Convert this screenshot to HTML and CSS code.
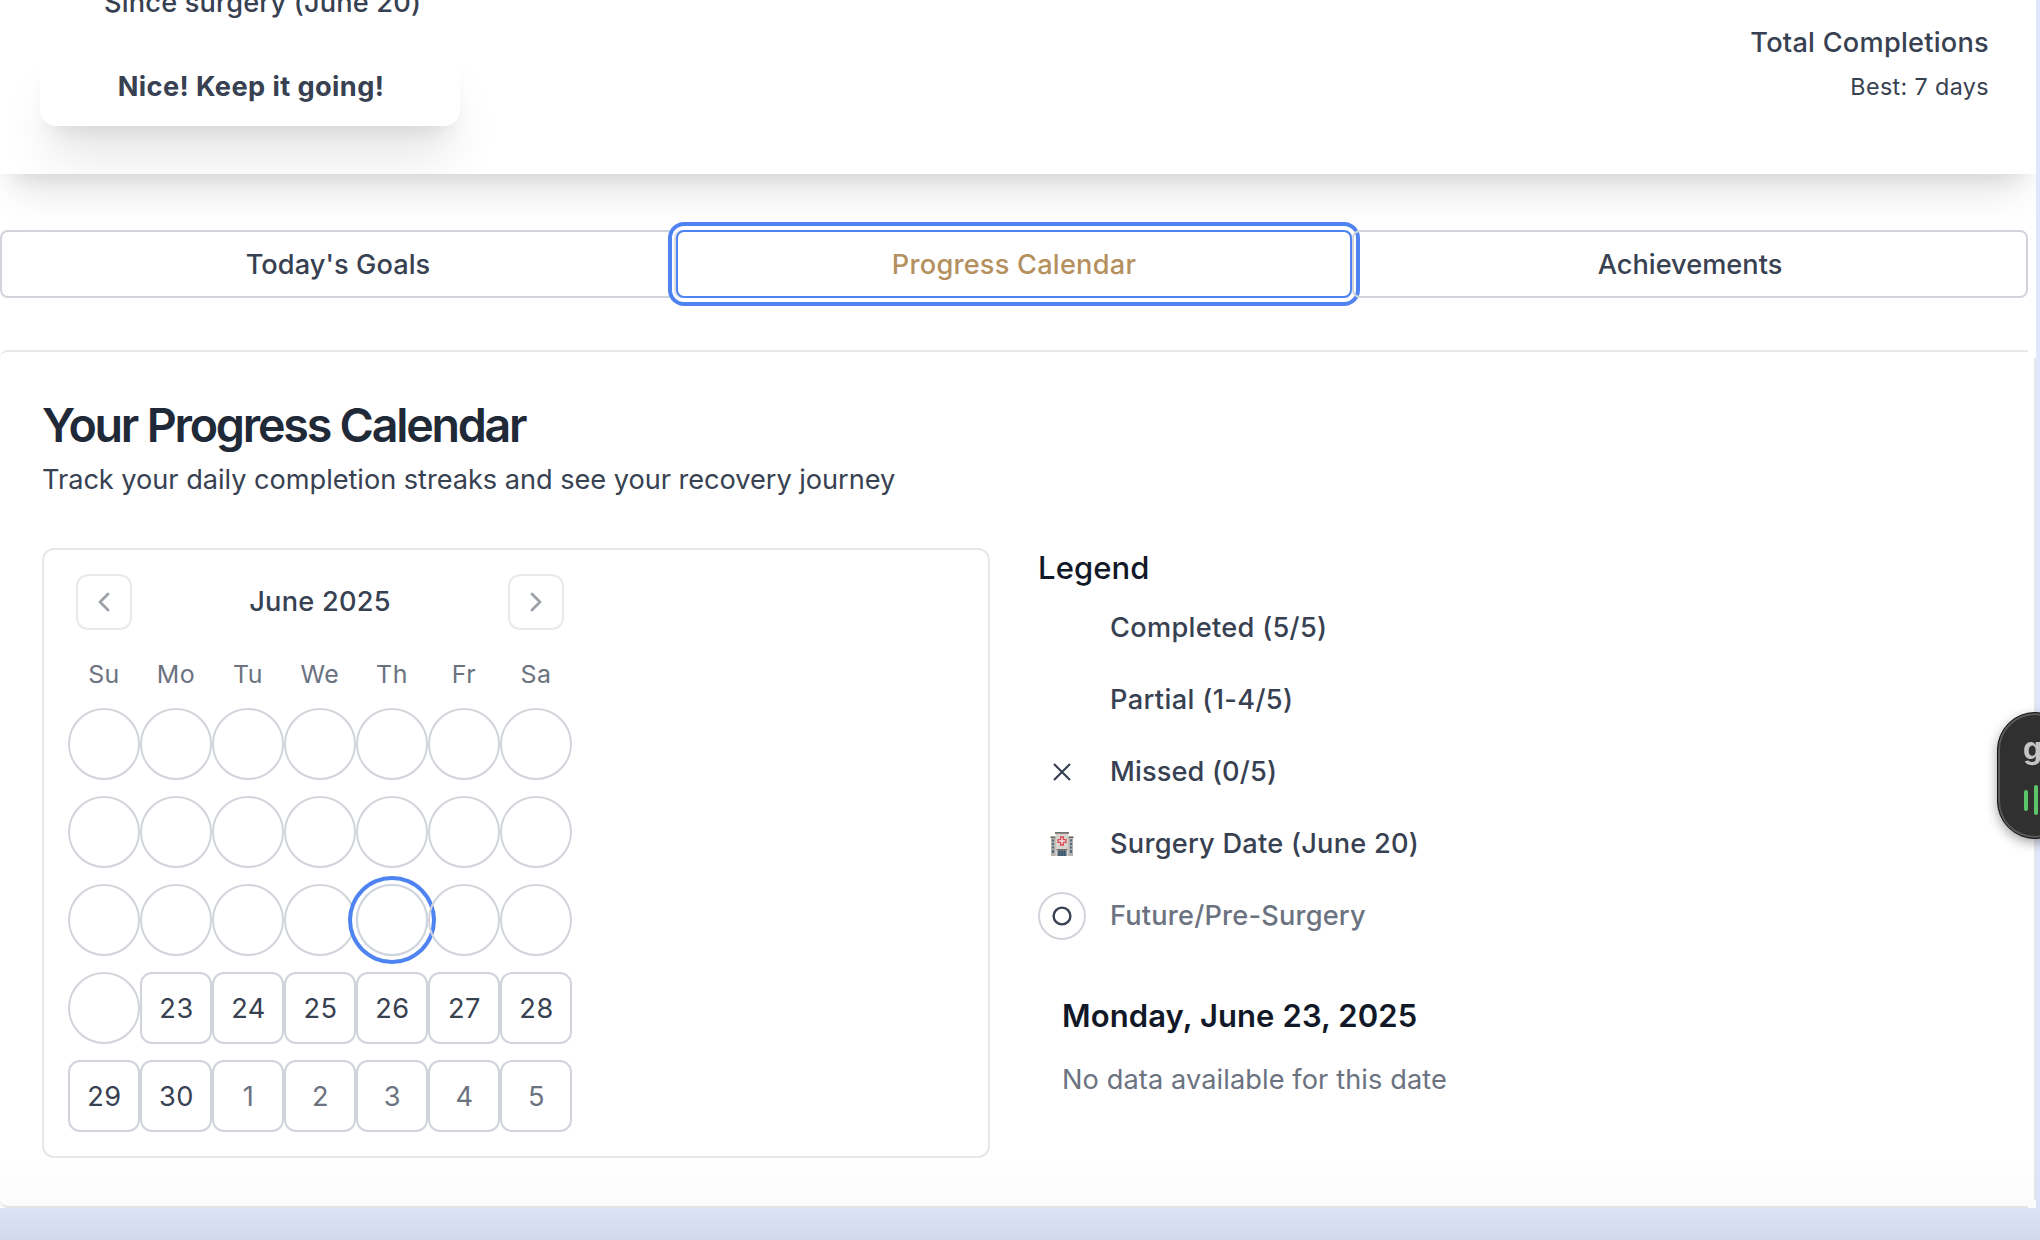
FILE: index.html
```html
<!DOCTYPE html>
<html lang="en">
<head>
<meta charset="utf-8">
<title>Recovery Progress</title>
<link rel="stylesheet" href="styles.css">
</head>
<body>
<main class="page">
  <section class="hero">
    <div class="streak">
      <p class="streak-label">Since surgery (June 20)</p>
      <div class="streak-note">Nice! Keep it going!</div>
    </div>
    <div class="totals">
      <p class="totals-label">Total Completions</p>
      <p class="totals-best">Best: 7 days</p>
    </div>
  </section>

  <nav class="tabs">
    <button class="tab tab-goals">Today's Goals</button>
    <button class="tab tab-active">Progress Calendar</button>
    <button class="tab tab-achievements">Achievements</button>
  </nav>

  <section class="panel">
    <h2 class="title">Your Progress Calendar</h2>
    <p class="subtitle">Track your daily completion streaks and see your recovery journey</p>
    <div class="columns">
      <div class="calendar">
        <div class="cal-head">
          <button class="cal-nav" aria-label="Previous month"><svg viewBox="0 0 14 22" width="14" height="22"><path d="M11 3 3 11l8 8"/></svg></button>
          <span class="cal-month">June 2025</span>
          <button class="cal-nav" aria-label="Next month"><svg viewBox="0 0 14 22" width="14" height="22"><path d="m3 3 8 8-8 8"/></svg></button>
        </div>
        <div class="weekdays"><span>Su</span><span>Mo</span><span>Tu</span><span>We</span><span>Th</span><span>Fr</span><span>Sa</span></div>
        <div class="days">
          <span class="day past"></span><span class="day past"></span><span class="day past"></span><span class="day past"></span><span class="day past"></span><span class="day past"></span><span class="day past"></span>
          <span class="day past"></span><span class="day past"></span><span class="day past"></span><span class="day past"></span><span class="day past"></span><span class="day past"></span><span class="day past"></span>
          <span class="day past"></span><span class="day past"></span><span class="day past"></span><span class="day past"></span><span class="day past focused"></span><span class="day past"></span><span class="day past"></span>
          <span class="day past"></span><span class="day">23</span><span class="day">24</span><span class="day">25</span><span class="day">26</span><span class="day">27</span><span class="day">28</span>
          <span class="day">29</span><span class="day">30</span><span class="day outside">1</span><span class="day outside">2</span><span class="day outside">3</span><span class="day outside">4</span><span class="day outside">5</span>
        </div>
      </div>

      <aside class="side">
        <h3 class="legend-title">Legend</h3>
        <ul class="legend">
          <li><span class="mark"></span><span class="completed">Completed (5/5)</span></li>
          <li><span class="mark"></span><span class="partial">Partial (1-4/5)</span></li>
          <li><span class="mark"><svg viewBox="0 0 20 20" width="20" height="20"><path class="cross" d="m2 2 16 16m0-16-16 16"/></svg></span><span class="missed">Missed (0/5)</span></li>
          <li><span class="mark"><svg viewBox="0 0 24 24" width="24" height="24">
            <path fill="#b5b0aa" d="M1 4.500h5V24H1zM18 4.500h5V24h-5z"/>
            <path fill="#6f6a66" d="M.5 4.500h5v1.600h-5zM18.500 4.500h5v1.600h-5z"/>
            <path fill="#d6d2ce" d="M5.500 1h13v23h-13z"/>
            <path fill="#77706c" d="M5 0h14v1.700H5zM6.500 17h11v1.300h-11z"/>
            <path fill="#4f6b80" d="M7.500 18.300h9V24h-9zM2 7.500h2v2H2zm0 3.500h2v2H2zm0 3.500h2v2H2zM2 18h2v3H2zM20 7.500h2v2h-2zm0 3.500h2v2h-2zm0 3.500h2v2h-2zm0 3.500h2v3h-2z"/>
            <path fill="#35424d" d="M11.600 18.300h.8V24h-.8zM9.300 18.300h.5V24h-.5zM14.200 18.300h.5V24h-.5z"/>
            <path fill="#f3e4e3" stroke="#dc4b50" stroke-width="1.300" d="M10.700 5h2.600v2.700H16v2.600h-2.700V13h-2.600v-2.700H8V7.700h2.700z"/>
          </svg></span><span>Surgery Date (June 20)</span></li>
          <li class="future"><span class="mark ringed"><svg viewBox="0 0 20 20" width="20" height="20"><circle class="hollow" cx="10" cy="10" r="8.400"/></svg></span><span>Future/Pre-Surgery</span></li>
        </ul>
        <div class="detail">
          <h4 class="detail-date">Monday, June 23, 2025</h4>
          <p class="detail-text">No data available for this date</p>
        </div>
      </aside>
    </div>
  </section>
</main>
<div class="shade"></div>
<div class="recorder"><span class="recorder-logo">g</span><span class="recorder-bars"><i class="bar short"></i><i class="bar"></i></span></div>
</body>
</html>
```
FILE: styles.css
```css
* { box-sizing: border-box; margin: 0; padding: 0; }
html, body { width: 100%; height: 1240px; overflow: hidden; }
body {
  background: #e0e6fb;
  font-family: Inter, "Liberation Sans", sans-serif;
  font-size: 27.2px;
  line-height: 40px;
  letter-spacing: 0.24px;
  color: #374151;
}
button { background: none; font: inherit; letter-spacing: inherit; color: inherit; }
ul { list-style: none; }

.page { width: 2036px; height: 1208px; background: #fff; overflow: hidden; }

/* Summary strip */
.hero {
  display: flex;
  justify-content: space-between;
  height: 174px;
  padding: 0 47px 0 40px;
  background: #fff;
  box-shadow: 0 30px 40px -14px rgba(0,0,0,.11), 0 16px 20px -12px rgba(0,0,0,.09);
}
.streak { width: 420px; margin-top: -17px; }
.streak-label { padding-left: 64px; font-weight: 500; white-space: nowrap; letter-spacing: .17px; }
.streak-note {
  height: 80px;
  margin-top: 23px;
  padding: 21px 0 19px 2px;
  border-radius: 16px;
  background: #fff;
  text-align: center;
  font-weight: 700;
  letter-spacing: .4px;
  box-shadow: 0 40px 50px -10px rgba(0,0,0,.1), 0 16px 20px -12px rgba(0,0,0,.1);
  clip-path: inset(0 -60px -48px -40px);
}
.totals { margin-top: 23px; text-align: right; }
.totals-label { font-weight: 500; }
.totals-best { margin-top: 4px; font-size: 23.3px; letter-spacing: .38px; }

/* Tabs */
.tabs { display: grid; grid-template-columns: repeat(3, 676px); height: 68px; margin-top: 56px; }
.tab { position: relative; padding-top: 1px; border: 2px solid #d1d5db; border-radius: 8px; font-weight: 500; }
.tab-goals { letter-spacing: .07px; }
.tab-achievements { letter-spacing: 0; }
.tab-active {
  border-color: #4f83f1;
  color: #b5905f;
  letter-spacing: .22px;
  box-shadow: -2px 0 0 #dcdfe3, 0 0 0 4px #fff, 0 0 0 8px #4f83f1;
}

/* Calendar panel */
.panel {
  position: relative;
  height: 858px;
  margin-top: 52px;
  padding: 45px 0 0 42px;
  border: 2px solid #e5e7eb;
  border-left: 0;
  border-radius: 8px;
}
/* The right-hand corners stay open where the edges meet */
.panel::before, .panel::after {
  content: "";
  position: absolute;
  right: -2px;
  width: 8px;
  height: 8px;
  background: #fff;
}
.panel::before { top: -2px; }
.panel::after { bottom: -2px; }
.title { font-size: 46.6px; line-height: 56px; font-weight: 600; letter-spacing: -2.23px; color: #1f2937; }
.subtitle { margin-top: 7px; letter-spacing: -.043px; }
.columns { display: grid; grid-template-columns: 948px 1fr; gap: 48px; margin-top: 48px; }
.calendar { height: 610px; padding: 24px; border: 2px solid #e5e7eb; border-radius: 12px; }
.cal-head { display: flex; justify-content: space-between; align-items: center; width: 504px; padding: 0 8px; }
.cal-month { font-weight: 500; }
.cal-nav {
  display: grid;
  place-items: center;
  width: 56px;
  height: 56px;
  border: 2px solid #e8e9ed;
  border-radius: 12px;
}
.cal-nav svg { fill: none; stroke: #9b9fa8; stroke-width: 2.8; stroke-linecap: round; stroke-linejoin: round; }
.weekdays {
  display: grid;
  grid-template-columns: repeat(7, 72px);
  margin-top: 26px;
  font-size: 24.9px;
  line-height: 36px;
  letter-spacing: .5px;
  text-align: center;
  color: #6b7280;
}
.days { display: grid; grid-template-columns: repeat(7, 72px); row-gap: 16px; margin-top: 16px; }
.day {
  position: relative;
  height: 72px;
  padding-left: 1px;
  border: 2px solid #d1d5db;
  border-radius: 12px;
  text-align: center;
  line-height: 69px;
  letter-spacing: .5px;
}
.past { border-radius: 50%; }
.focused { box-shadow: 0 0 0 4px #fff, 0 0 0 8px #4f83f1; }
.outside { color: #6b7280; }

/* Legend and selected day */
.side { margin-top: -4px; }
.legend-title { font-size: 31px; line-height: 48px; font-weight: 500; letter-spacing: .1px; color: #111827; }
.legend { display: grid; gap: 24px; margin-top: 12px; font-weight: 500; }
.legend li { display: flex; align-items: center; gap: 24px; height: 48px; }
.mark { display: grid; place-items: center; width: 48px; height: 48px; }
.mark svg { fill: none; }
.ringed { border: 2px solid #d1d5db; border-radius: 50%; }
.cross { stroke: #374151; stroke-width: 2.2; }
.hollow { stroke: #374151; stroke-width: 2.4; }
.completed { letter-spacing: .3px; }
.partial { letter-spacing: .36px; }
.missed { letter-spacing: .14px; }
.future { color: #6b7280; letter-spacing: .19px; }
.detail { margin-top: 52px; padding-left: 24px; }
.detail-date { font-size: 31px; line-height: 48px; font-weight: 600; letter-spacing: .1px; color: #111827; }
.detail-text { margin-top: 20px; letter-spacing: .09px; color: #6b7280; }

/* Shade along the bottom edge of the window */
.shade {
  position: fixed;
  left: 0;
  right: 0;
  bottom: 0;
  height: 84px;
  background: linear-gradient(rgba(0,0,0,0), rgba(0,0,0,.015) 60%, rgba(0,0,0,.055));
}

/* Floating recorder, partly past the window edge */
.recorder {
  position: fixed;
  top: 712px;
  right: -33px;
  width: 76px;
  height: 127px;
  padding: 15px 0 0 25px;
  border: 1px solid #111;
  border-radius: 38px;
  background: #303030;
  box-shadow: inset 0 0 0 2px #5a5a5a, 0 4px 12px rgba(0,0,0,.35);
}
.recorder-logo { display: block; height: 40px; font-size: 30px; font-weight: 700; color: #c4c4c4; }
.recorder-bars { display: flex; align-items: center; gap: 6px; height: 30px; margin-top: 17px; padding-left: 1px; }
.bar { width: 4px; height: 30px; border-radius: 2px; background: #5cc469; }
.short { height: 21px; }
```
